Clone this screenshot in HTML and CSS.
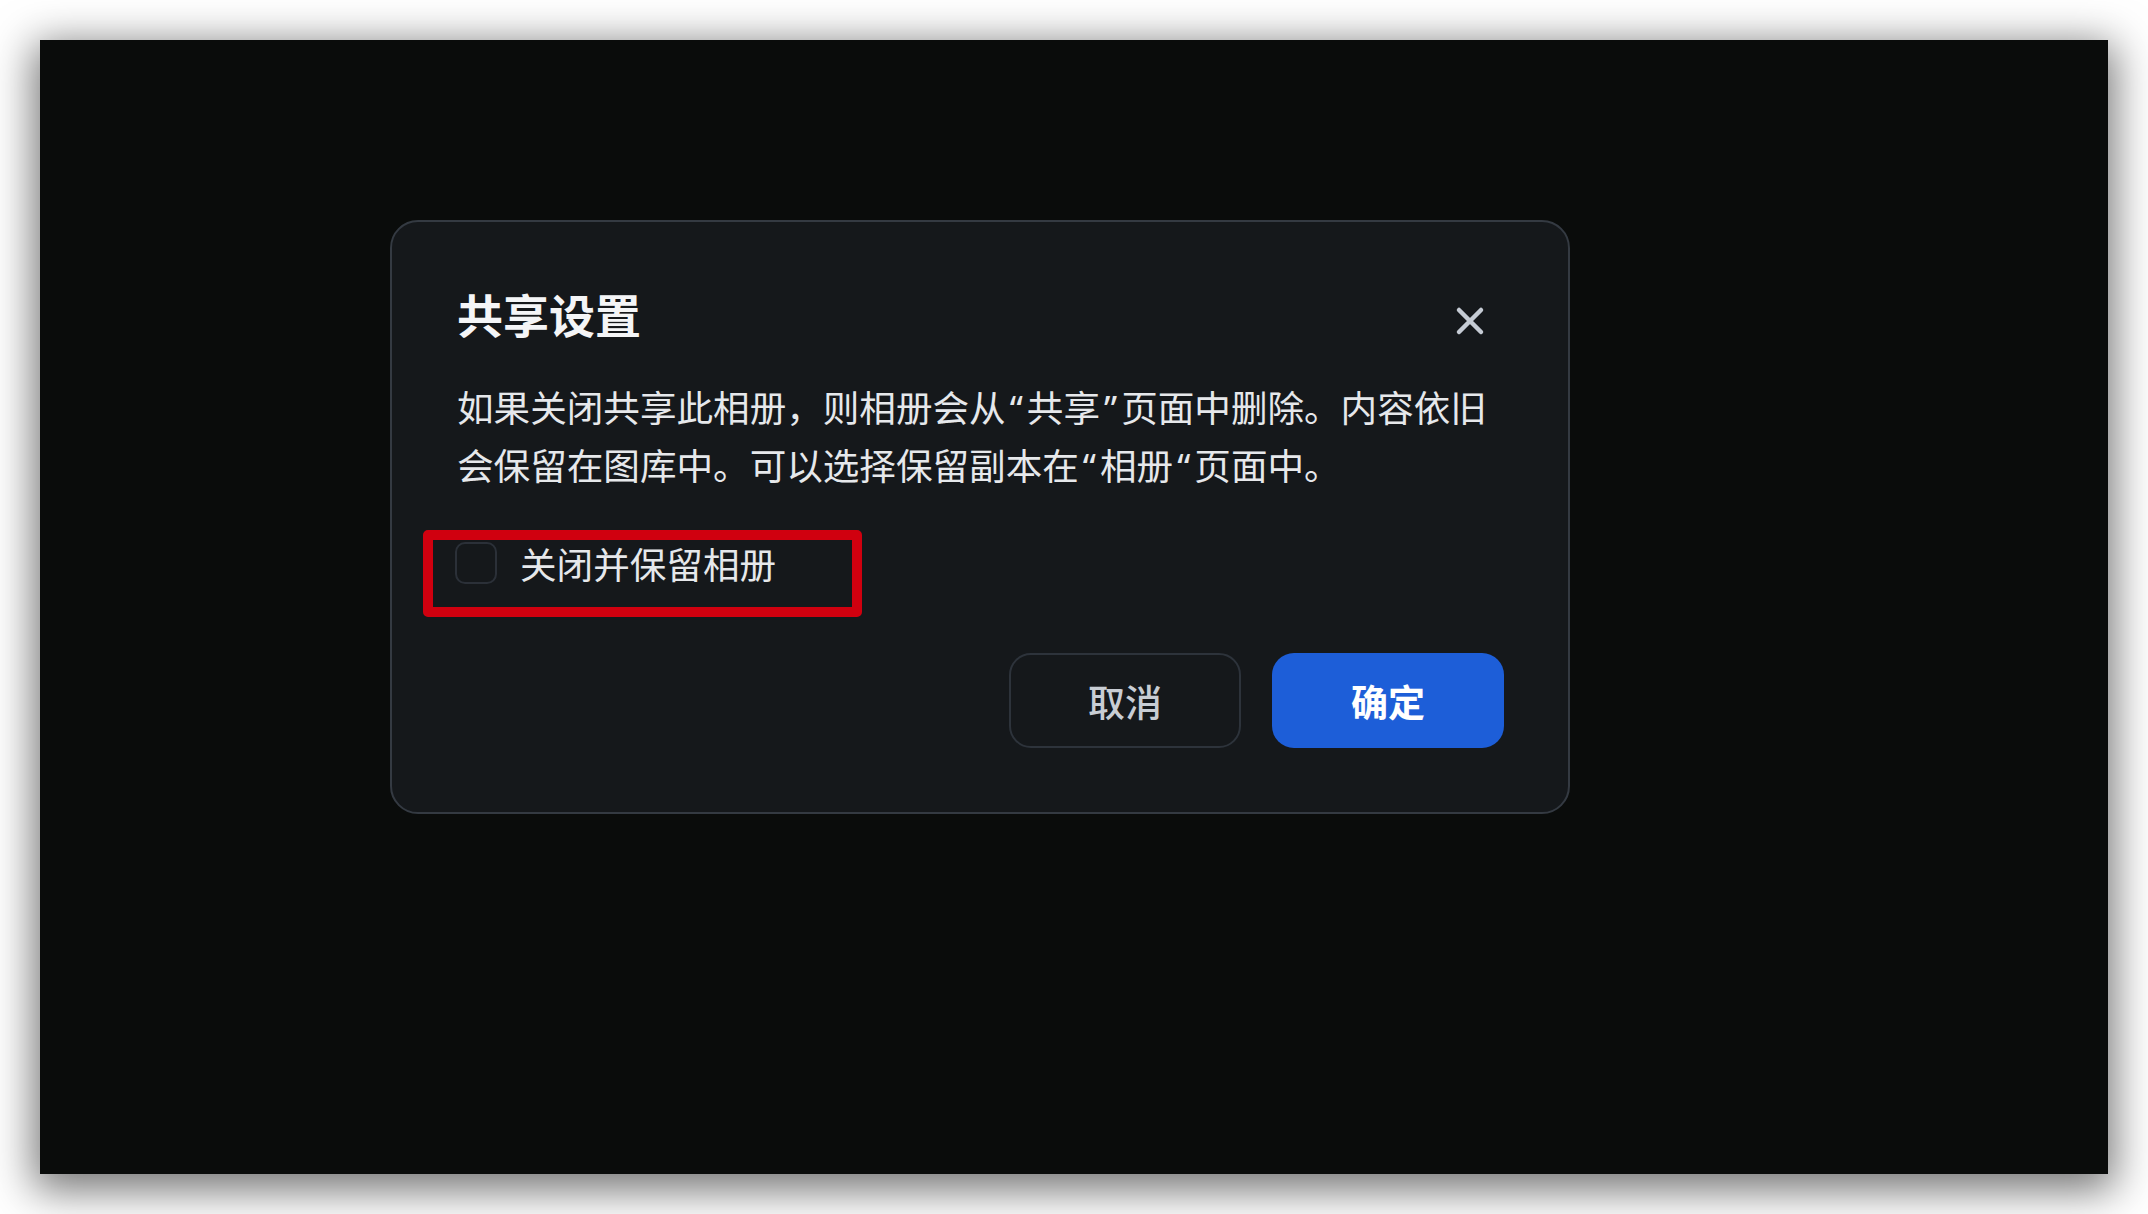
FILE: index.html
```html
<!DOCTYPE html>
<html lang="zh-CN">
<head>
  <meta charset="UTF-8" />
  <meta name="viewport" content="width=device-width, initial-scale=1.0"/>
  <title>共享设置</title>
  <link rel="stylesheet" href="styles.css">
</head>
<body>
  <div class="screen">
    <!-- 对话框 -->
    <div class="dialog">
      <div class="dialog-head">
        <h2 class="dialog-title">共享设置</h2>
        <button class="close" aria-label="关闭">
          <svg width="30" height="30" viewBox="0 0 30 30">
            <path d="M4 4 L26 26 M26 4 L4 26" stroke="currentColor" stroke-width="4.5" stroke-linecap="round" fill="none"/>
          </svg>
        </button>
      </div>

      <p class="dialog-text">如果关闭共享此相册，则相册会从<span class="q">“</span>共享<span class="q">”</span>页面中删除。内容依旧会保留在图库中。可以选择保留副本在<span class="q">“</span>相册<span class="q">“</span>页面中。</p>

      <label class="check-row">
        <span class="check-box"></span>
        <span class="check-label">关闭并保留相册</span>
      </label>

      <div class="dialog-actions">
        <button class="btn btn-ghost">取消</button>
        <button class="btn btn-primary">确定</button>
      </div>

      <div class="highlight"></div>
    </div>
  </div>
</body>
</html>
```

FILE: styles.css
```css
html, body {
  margin: 0;
  background-color: #ffffff;
  overflow: hidden;
}

body {
  padding: 40px;
  font-family: "Noto Sans", "Noto Sans CJK SC", sans-serif;
}

.screen {
  height: 1134px;
  box-sizing: border-box;
  padding: 180px 0 0 350px;
  background-color: #0a0c0b;
  box-shadow: 0 10px 40px 6px rgba(0, 0, 0, 0.55);
}

.dialog {
  position: relative;
  width: 1180px;
  box-sizing: border-box;
  padding: 61px 64px 64px 65px;
  background-color: #15181b;
  border: 2px solid #343a42;
  border-radius: 28px;
  color: #e8eaed;
}

.dialog-head {
  display: flex;
  justify-content: space-between;
  align-items: center;
  height: 64px;
  margin-bottom: 32px;
}

.dialog-title {
  margin: 0;
  font-size: 46px;
  line-height: 64px;
  font-weight: 700;
  color: #f4f5f7;
}

.close {
  display: flex;
  align-items: center;
  justify-content: center;
  width: 48px;
  height: 48px;
  margin: 12px 10px 0 0;
  padding: 0;
  border: none;
  background: none;
  color: #c5cbd4;
}

.dialog-text {
  margin: 0;
  font-size: 36.6px;
  line-height: 58px;
  color: #e6e8eb;
}

.q {
  margin: 0 4px;
}

.check-row {
  display: flex;
  align-items: center;
  gap: 23px;
  height: 58px;
  margin-top: 39px;
  margin-left: -2px;
  font-size: 36.6px;
  color: #e6e8eb;
}

.check-box {
  width: 42px;
  height: 42px;
  box-sizing: border-box;
  border: 2px solid #2b3038;
  border-radius: 10px;
}

.dialog-actions {
  display: flex;
  justify-content: flex-end;
  gap: 31px;
  margin-top: 61px;
}

.btn {
  width: 232px;
  height: 95px;
  border-radius: 22px;
  font-family: inherit;
  font-size: 37px;
  cursor: pointer;
}

.btn-ghost {
  background-color: transparent;
  border: 2px solid #2d333b;
  color: #c8cdd4;
  font-weight: 500;
}

.btn-primary {
  background-color: #1d5ed8;
  border: none;
  color: #ffffff;
  font-weight: 700;
}

/* 红框标注 */
.highlight {
  position: absolute;
  left: 31px;
  top: 308px;
  width: 439px;
  height: 87px;
  box-sizing: border-box;
  border: 10px solid #d0000f;
  border-radius: 5px;
}
```
